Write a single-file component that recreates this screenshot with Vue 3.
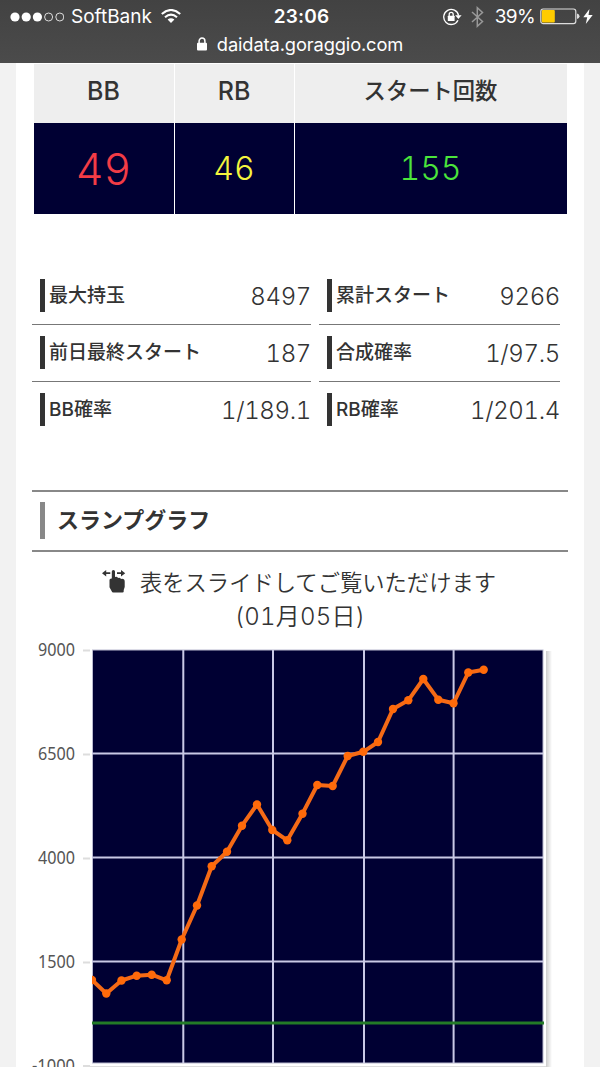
<template>
  <div class="screen">
    <header class="browser-bar">
      <div class="status">
        <div class="status-left">
          <svg class="signal" width="54" height="12" viewBox="0 0 54 12">
            <circle v-for="n in 5" :key="n" :cx="n * 11.2 - 6.2" cy="6" :r="n < 4 ? 4.6 : 4" :class="n < 4 ? 'dot-full' : 'dot-empty'" />
          </svg>
          <span class="carrier">SoftBank</span>
          <svg width="20" height="15" viewBox="0 0 20 15" fill="none" stroke="#fff" stroke-width="2.1">
            <path d="M.8 5Q10-3 19.2 5M4 8.3Q10 3 16 8.3" />
            <path d="M6.6 10.6Q10 7.7 13.4 10.6L10 14Z" fill="#fff" stroke="none" />
          </svg>
        </div>
        <span class="clock">23:06</span>
        <div class="status-right">
          <svg width="20" height="18" viewBox="0 0 20 18" fill="none" stroke="#fff" stroke-width="1.3">
            <path d="M16 12.2A7.5 7.5 0 1 1 16.6 7.6" />
            <path d="M13.2 7.2H19.6L16.4 11Z" fill="#fff" stroke="none" />
            <rect x="5.8" y="7.8" width="6.8" height="5.2" rx=".5" fill="#fff" stroke="none" />
            <path d="M7.2 8.3V6.4a2 2 0 0 1 4 0V8.3" />
          </svg>
          <svg class="bluetooth" width="13" height="22" viewBox="0 0 13 22" fill="none" stroke="#999" stroke-width="1.5">
            <path d="M1 6L11.5 15.5L6.3 20.2V1.8L11.5 6.5L1 16" />
          </svg>
          <span class="percent">39%</span>
          <svg width="40" height="17" viewBox="0 0 40 17">
            <rect x=".8" y="1" width="35" height="14.6" rx="2.4" fill="none" stroke="#ddd" stroke-width="1.2" />
            <rect x="1.8" y="2" width="13" height="12.6" rx="1" fill="#fc0" />
            <path d="M37 5.5Q39.5 6 39.5 8.3T37 11Z" fill="#ddd" />
          </svg>
          <svg class="bolt" width="10" height="15" viewBox="0 0 10 15">
            <path d="M6.5 0L.3 8.2H4.2L2.8 15L9.7 5.9H5.5Z" fill="#fff" />
          </svg>
        </div>
      </div>
      <div class="address">
        <svg width="10" height="14" viewBox="0 0 10 14">
          <rect y="5.8" width="10" height="7.8" rx="1" fill="#fff" />
          <path d="M2.1 6.5V4a2.9 2.9 0 0 1 5.8 0V6.5" fill="none" stroke="#fff" stroke-width="1.5" />
        </svg>
        <span>daidata.goraggio.com</span>
      </div>
    </header>

    <main class="page">
      <table class="counts">
        <thead>
          <tr>
            <th class="col-bb">BB</th>
            <th class="col-rb">RB</th>
            <th class="col-start">スタート回数</th>
          </tr>
        </thead>
        <tbody>
          <tr>
            <td class="bb">49</td>
            <td class="rb">46</td>
            <td class="start">155</td>
          </tr>
        </tbody>
      </table>

      <div class="stats">
        <dl v-for="(column, index) in stats" :key="index" class="stats-column">
          <div v-for="item in column" :key="item.label" class="stat">
            <dt>{{ item.label }}</dt>
            <dd>{{ item.value }}</dd>
          </div>
        </dl>
      </div>

      <h2 class="heading"><span>スランプグラフ</span></h2>

      <div class="guide">
        <svg width="24" height="24" viewBox="0 0 24 24" fill="#333">
          <path d="M0 4.2L4.2 1V3.3H8.3V5.1H4.2V7.4ZM23.2 4.2L19 1V3.3H15V5.1H19V7.4Z" />
          <path d="M9.8 2.4Q9.8.9 11.4.9T13 2.4V8Q15.3 7.4 16 8.9Q18 8.3 19 9.9Q22.7 9.3 22.7 12.4V18L21.7 21V22.5Q21.7 23.5 20.5 23.5H11.4Q10 23.5 9.7 22.3L7.5 18.2V11Q7.5 9.3 9.8 9.5Z" />
        </svg>
        <span>表をスライドしてご覧いただけます</span>
      </div>
      <p class="date">(01月05日)</p>

      <svg class="chart" width="568" height="433" viewBox="16 634 568 433">
        <defs>
          <linearGradient id="edge">
            <stop offset="0" stop-color="#ccc" />
            <stop offset="1" stop-color="#fff" />
          </linearGradient>
          <clipPath id="plot">
            <rect x="92" y="650" width="452" height="413" />
          </clipPath>
        </defs>
        <rect x="546" y="651" width="6" height="416" fill="url(#edge)" />
        <path d="M88 1066.5H546" stroke="#ddd" />
        <rect x="92.5" y="650" width="450.5" height="413" fill="#003" stroke="#b9b9cf" />
        <path d="M183.3 650V1063M273 650V1063M364 650V1063M453.6 650V1063" class="grid" />
        <path d="M92 753.5H543M92 857.5H543M92 961.5H543" class="grid" />
        <path d="M92 1023H544" stroke="#237b27" stroke-width="3" />
        <g clip-path="url(#plot)">
          <polyline :points="line" fill="none" stroke="#f56a16" stroke-width="4" stroke-linejoin="round" />
          <circle v-for="(point, index) in points" :key="index" :cx="point[0]" :cy="point[1]" r="4.2" fill="#ff6a0a" />
        </g>
        <g v-for="tick in ticks" :key="tick.label">
          <path :d="`M83 ${tick.y + 0.5}H90`" stroke="#ddd" stroke-width="2" />
          <text x="75" :y="tick.y + 6" :textLength="tick.width" lengthAdjust="spacingAndGlyphs" class="tick">{{ tick.label }}</text>
        </g>
      </svg>
    </main>
  </div>
</template>

<script setup>
import { computed } from 'vue';

const stats = [
  [
    { label: '最大持玉', value: '8497' },
    { label: '前日最終スタート', value: '187' },
    { label: 'BB確率', value: '1/189.1' },
  ],
  [
    { label: '累計スタート', value: '9266' },
    { label: '合成確率', value: '1/97.5' },
    { label: 'RB確率', value: '1/201.4' },
  ],
];

const ticks = [
  { label: '9000', y: 650, width: 37 },
  { label: '6500', y: 754, width: 37 },
  { label: '4000', y: 858, width: 37 },
  { label: '1500', y: 962, width: 37 },
  { label: '-1000', y: 1065.5, width: 43 },
];

const points = [
  [92, 980], [106.3, 993.5], [121.5, 980.5], [136.7, 975.7], [151.7, 974.7],
  [166.7, 980.3], [181.7, 939.5], [197, 905.5], [211.7, 866.3], [227, 851.7],
  [242, 825.7], [257, 804.5], [272.3, 830], [287.3, 840.3], [302.5, 813.7],
  [317.3, 785], [332.7, 786], [347.7, 756], [363.3, 751.8], [378, 742],
  [393, 709], [408.3, 700.3], [423.3, 679], [438.3, 699.7], [453.5, 703.3],
  [468.3, 672.5], [483.7, 669.7],
];

const line = computed(() => points.map((p) => p.join(',')).join(' '));
</script>

<style>
body {
  margin: 0;
  overflow: hidden;
}
</style>

<style scoped>
.screen {
  width: 600px;
  height: 1067px;
  overflow: hidden;
  background: #f2f2f2;
  color: #333;
  font-family: Inter, "Noto Sans CJK JP", sans-serif;
}

.browser-bar {
  height: 63px;
  box-sizing: border-box;
  padding-top: 4px;
  background: linear-gradient(#424242, #4b4b4b);
  color: #fff;
}

.status {
  display: grid;
  grid-template-columns: 1fr auto 1fr;
  height: 25px;
  align-items: center;
  padding: 0 7px 0 10px;
}

.status-left,
.status-right {
  display: flex;
  align-items: center;
}

.status-right {
  justify-content: flex-end;
}

.signal {
  margin-right: 7px;
}

.dot-full {
  fill: #fff;
}

.dot-empty {
  fill: none;
  stroke: #ddd;
}

.carrier {
  margin-right: 9px;
  font-size: 19px;
}

.clock {
  font-size: 19px;
  font-weight: 600;
  letter-spacing: 0.2px;
}

.bluetooth {
  margin: 0 11px 0 9px;
}

.percent {
  margin-right: 5px;
  font-size: 19px;
  letter-spacing: -0.6px;
}

.bolt {
  margin-left: 3px;
}

.address {
  display: flex;
  justify-content: center;
  align-items: center;
  gap: 10px;
  height: 29px;
  font-size: 18.3px;
  letter-spacing: -0.12px;
}

.page {
  width: 568px;
  height: 1004px;
  margin: 0 auto;
  background: #fff;
  overflow: hidden;
}

.counts {
  width: 533px;
  margin: 1px 0 0 17.5px;
  border-spacing: 0;
  table-layout: fixed;
}

.counts th,
.counts td {
  box-sizing: border-box;
  padding: 0;
  text-align: center;
}

.counts th {
  height: 59px;
  padding-bottom: 6px;
  background: #eee;
  font-size: 25px;
  font-weight: 500;
}

.counts th + th,
.counts td + td {
  border-left: 1.5px solid #fff;
}

.counts .col-bb {
  width: 140px;
}

.counts .col-rb {
  width: 120px;
}

.counts .col-start {
  padding-bottom: 9px;
  font-size: 22.3px;
}

.counts td {
  height: 91px;
  background: #003;
  font-weight: 300;
  font-feature-settings: "tnum";
}

.counts .bb {
  color: #f23c46;
  font-size: 43px;
}

.counts .rb {
  color: #f5f53d;
  font-size: 32px;
}

.counts .start {
  color: #4be53b;
  font-size: 32px;
}

.stats {
  display: flex;
  gap: 8px;
  margin: 54px 24px 0 16px;
}

.stats-column {
  width: 279px;
  margin: 0;
}

.stats-column + .stats-column {
  width: 241px;
}

.stat {
  display: flex;
  align-items: center;
  justify-content: space-between;
  height: 57px;
  box-sizing: border-box;
  padding: 0 0 2px 8px;
  border-bottom: 1.5px solid #777;
}

.stat:last-child {
  border-bottom: 0;
}

.stat dt {
  padding-left: 4px;
  border-left: 5px solid #333;
  font-size: 19px;
  font-weight: 500;
  line-height: 33px;
}

.stat dd {
  margin: 0;
  padding-top: 2px;
  font-size: 24px;
  font-weight: 300;
  font-feature-settings: "tnum";
  letter-spacing: -0.35px;
}

.heading {
  height: 62px;
  box-sizing: border-box;
  margin: 51px 16px 0;
  padding: 10px 8px;
  border-top: 2px solid #888;
  border-bottom: 2px solid #888;
  font-size: 22px;
  font-weight: 700;
}

.heading span {
  display: block;
  padding-left: 12px;
  border-left: 5px solid #888;
  line-height: 37px;
}

.guide {
  display: flex;
  justify-content: center;
  gap: 14px;
  height: 34px;
  margin: 14px 2px 0 0;
  font-size: 22.3px;
  font-weight: 350;
  line-height: 34px;
}

.guide svg {
  margin-top: 3px;
}

.date {
  height: 34px;
  margin: 0;
  font-size: 24px;
  font-weight: 350;
  font-feature-settings: "tnum";
  letter-spacing: 0.2px;
  line-height: 34px;
  text-align: center;
}

.chart {
  display: block;
}

.grid {
  fill: none;
  stroke: #c9c9e6;
  stroke-width: 2;
}

.tick {
  fill: #555;
  font-family: "Noto Sans", sans-serif;
  font-size: 17.5px;
  text-anchor: end;
}
</style>
